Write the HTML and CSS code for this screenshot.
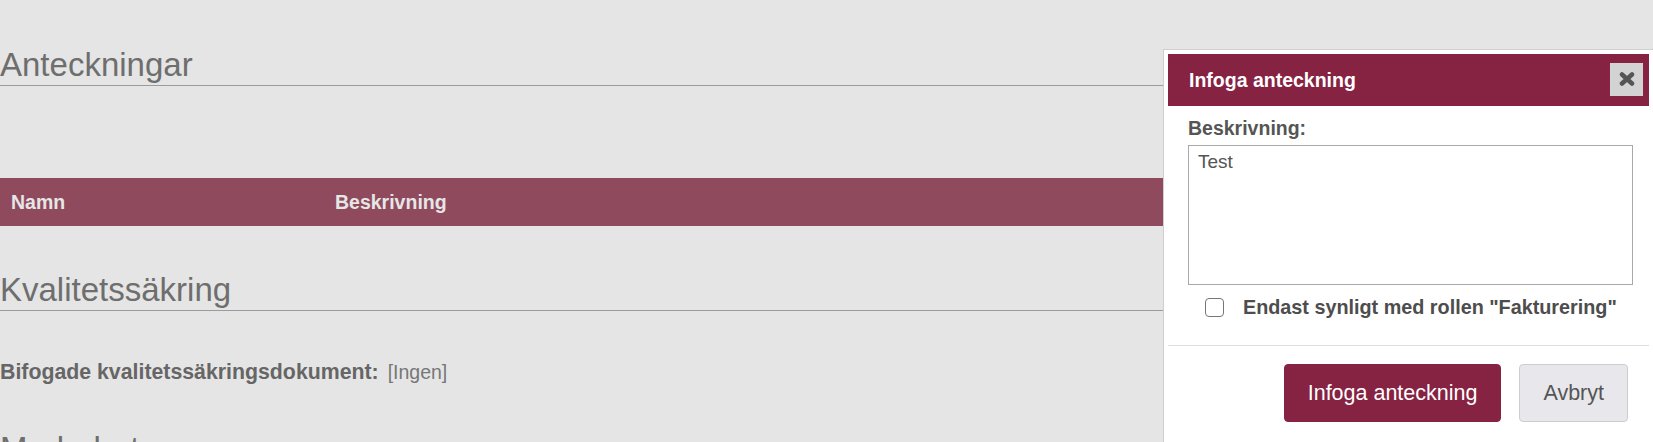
FILE: index.html
```html
<!DOCTYPE html>
<html lang="sv">
<head>
  <meta charset="UTF-8" />
  <meta name="viewport" content="width=device-width, initial-scale=1.0" />
  <title>Infoga anteckning</title>
  <link rel="stylesheet" href="styles.css">
</head>
<body>
  <div class="page">
    <section class="panel">
      <h2 class="panel-title">Anteckningar</h2>
      <table class="grid">
        <thead>
          <tr>
            <th class="col-name">Namn</th>
            <th>Beskrivning</th>
          </tr>
        </thead>
      </table>
    </section>

    <section class="panel">
      <h2 class="panel-title panel-title-second">Kvalitetssäkring</h2>
      <p class="field">
        <span class="field-label">Bifogade kvalitetssäkringsdokument:</span>
        <span class="field-value">[Ingen]</span>
      </p>
    </section>

    <section class="panel">
      <h2 class="panel-title panel-title-third">Medarbetare</h2>
    </section>
  </div>

  <!-- modal dialog -->
  <div class="dialog">
    <div class="dialog-titlebar">
      <span class="dialog-title">Infoga anteckning</span>
      <button class="dialog-close" title="Stäng">
        <svg width="16" height="14" viewBox="0 0 16 14">
          <path d="M3 2.5 L13 11.5 M13 2.5 L3 11.5" stroke="#555" stroke-width="4.5" stroke-linecap="round" fill="none"/>
        </svg>
      </button>
    </div>

    <div class="dialog-content">
      <label class="caption" for="noteText">Beskrivning:</label>
      <textarea id="noteText" class="note-text">Test</textarea>
      <label class="check-row">
        <input type="checkbox" class="check">
        <span>Endast synligt med rollen "Fakturering"</span>
      </label>
    </div>

    <div class="dialog-buttons">
      <button class="btn btn-primary">Infoga anteckning</button>
      <button class="btn btn-default">Avbryt</button>
    </div>
  </div>
</body>
</html>
```

FILE: styles.css
```css
body {
  margin: 0;
  padding: 0;
  background: #e5e5e5;
  font-family: "Liberation Sans", Arial, sans-serif;
  color: #666;
  overflow: hidden;
}
.page {
  padding-top: 47px;
}
.panel-title {
  margin: 0;
  font-size: 33px;
  font-weight: normal;
  line-height: 36px;
  color: #6e6e6e;
  padding-bottom: 2px;
  border-bottom: 1px solid #9b9b9b;
}
.panel-title-second {
  margin-top: 46px;
}
.panel-title-third {
  margin-top: 47px;
  border-bottom: none;
}
.grid {
  width: 100%;
  margin-top: 92px;
  border-collapse: collapse;
}
.grid th {
  height: 48px;
  padding: 0 11px;
  background: #8f4a5e;
  color: #e6e6e6;
  font-size: 19.5px;
  text-align: left;
}
.grid .col-name {
  width: 302px;
}
.field {
  margin: 49px 0 0;
  line-height: 24px;
  font-size: 21.3px;
}
.field-label {
  font-weight: bold;
  color: #666;
}
.field-value {
  font-size: 19.5px;
  color: #777;
  margin-left: 3px;
}

/* dialog */
.dialog {
  position: absolute;
  top: 49px;
  left: 1163px;
  width: 491px;
  height: 420px;
  box-sizing: border-box;
  padding: 4px;
  background: #fff;
  border: 1px solid #cfcfcf;
}
.dialog-titlebar {
  display: flex;
  align-items: center;
  justify-content: space-between;
  height: 52px;
  padding: 0 6px 0 21px;
  background: #862242;
}
.dialog-title {
  color: #fff;
  font-weight: bold;
  font-size: 19.5px;
}
.dialog-close {
  display: flex;
  align-items: center;
  justify-content: center;
  width: 33px;
  height: 33px;
  padding: 0;
  border: none;
  background: #d3d3d3;
  margin-top: -2px;
}
.dialog-content {
  padding: 11px 16px 26px 20px;
}
.caption {
  display: block;
  font-size: 19.5px;
  line-height: 22px;
  font-weight: bold;
  color: #555;
}
.note-text {
  display: block;
  width: 445px;
  height: 140px;
  margin-top: 6px;
  box-sizing: border-box;
  padding: 5px 9px;
  border: 1px solid #a9a9a9;
  resize: none;
  font-family: "Liberation Sans", Arial, sans-serif;
  font-size: 19px;
  color: #555;
}
.check-row {
  display: flex;
  align-items: center;
  gap: 19px;
  margin-top: 11px;
  padding-left: 17px;
  font-size: 19.8px;
  font-weight: bold;
  color: #4d4d4d;
}
.check {
  appearance: none;
  width: 19px;
  height: 19px;
  margin: 0;
  border: 1.5px solid #767676;
  border-radius: 4px;
  background: #fff;
}
.dialog-buttons {
  display: flex;
  justify-content: flex-end;
  gap: 18px;
  padding: 18px 21px 0 0;
  border-top: 1px solid #dedede;
}
.btn {
  height: 58px;
  padding: 0 23px;
  border-radius: 4px;
  font-family: "Liberation Sans", Arial, sans-serif;
  font-size: 21.5px;
}
.btn-primary {
  background: #862242;
  border: 1px solid #862242;
  color: #fff;
}
.btn-default {
  background: #e8e8ec;
  border: 1px solid #cdcdcd;
  color: #555;
}
```
